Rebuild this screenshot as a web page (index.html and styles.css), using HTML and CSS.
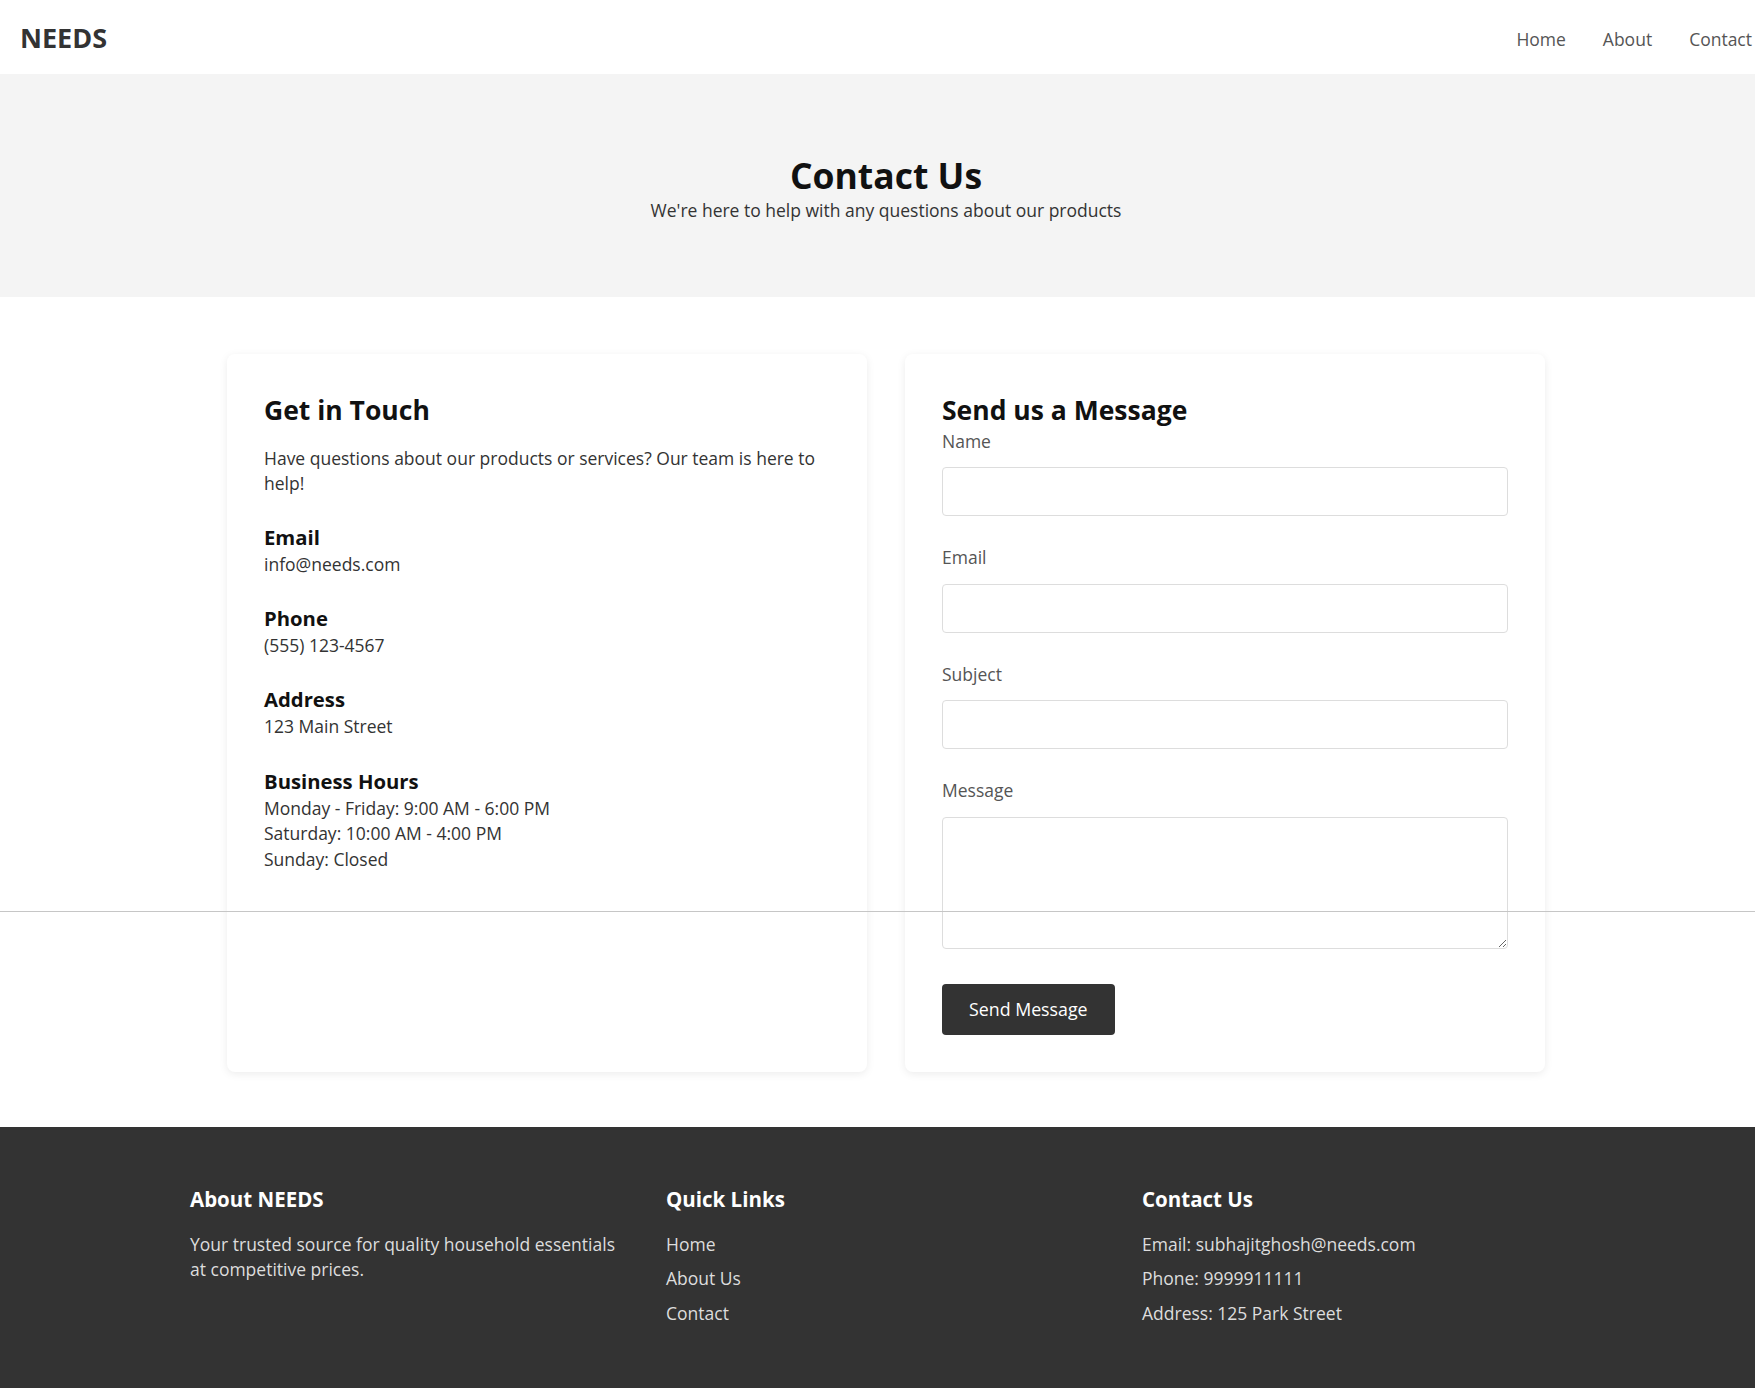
FILE: index.html
```html
<!DOCTYPE html>
<html lang="en">
<head>
<meta charset="utf-8">
<title>Contact Us - NEEDS</title>
<link rel="stylesheet" href="styles.css">
</head>
<body>
<div class="page">
  <header class="site-header">
    <div class="logo">NEEDS</div>
    <nav class="main-nav">
      <a href="#">Home</a>
      <a href="#">About</a>
      <a href="#">Contact</a>
    </nav>
  </header>

  <section class="hero">
    <h1>Contact Us</h1>
    <p>We're here to help with any questions about our products</p>
  </section>

  <main class="contact-section">
    <div class="contact-grid">
      <div class="card info-card">
        <h2>Get in Touch</h2>
        <p class="intro">Have questions about our products or services? Our team is here to help!</p>
        <div class="info-item">
          <h3>Email</h3>
          <p>info@needs.com</p>
        </div>
        <div class="info-item">
          <h3>Phone</h3>
          <p>(555) 123-4567</p>
        </div>
        <div class="info-item">
          <h3>Address</h3>
          <p>123 Main Street</p>
        </div>
        <div class="info-item">
          <h3>Business Hours</h3>
          <p>Monday - Friday: 9:00 AM - 6:00 PM<br>Saturday: 10:00 AM - 4:00 PM<br>Sunday: Closed</p>
        </div>
      </div>

      <div class="card form-card">
        <h2>Send us a Message</h2>
        <form class="contact-form">
          <div class="form-group">
            <label for="name">Name</label>
            <input type="text" id="name">
          </div>
          <div class="form-group">
            <label for="email">Email</label>
            <input type="email" id="email">
          </div>
          <div class="form-group">
            <label for="subject">Subject</label>
            <input type="text" id="subject">
          </div>
          <div class="form-group message-group">
            <label for="message">Message</label>
            <textarea id="message" rows="5"></textarea>
          </div>
          <button type="button" class="send-btn">Send Message</button>
        </form>
      </div>
    </div>
  </main>

  <footer class="site-footer">
    <div class="footer-grid">
      <div class="footer-col">
        <h3>About NEEDS</h3>
        <p class="footer-about">Your trusted source for quality household essentials at competitive prices.</p>
      </div>
      <div class="footer-col">
        <h3>Quick Links</h3>
        <ul class="footer-list">
          <li><a href="#">Home</a></li>
          <li><a href="#">About Us</a></li>
          <li><a href="#">Contact</a></li>
        </ul>
      </div>
      <div class="footer-col">
        <h3>Contact Us</h3>
        <ul class="footer-list">
          <li>Email: subhajitghosh@needs.com</li>
          <li>Phone: 9999911111</li>
          <li>Address: 125 Park Street</li>
        </ul>
      </div>
    </div>
  </footer>

  <div class="seam-line"></div>
</div>
</body>
</html>
```

FILE: styles.css
```css
html {
  background: #333333;
}

body {
  margin: 0;
  overflow-x: hidden;
  font-family: "Open Sans", "Noto Sans", "Liberation Sans", sans-serif;
  font-size: 17.5px;
  line-height: 25.6px;
  color: #333333;
}

.page {
  position: relative;
  width: 1772px;
  background: #ffffff;
}

/* Header */
.site-header {
  height: 74px;
  padding: 0 20px;
  display: flex;
  align-items: center;
  justify-content: space-between;
  background: #ffffff;
}

.logo {
  font-size: 27px;
  font-weight: 700;
  color: #333333;
  line-height: 34px;
  margin-top: 2px;
}

.main-nav {
  display: flex;
  gap: 37px;
  margin-top: 5px;
}

.main-nav a {
  color: #555555;
  text-decoration: none;
  font-size: 17.5px;
}

/* Hero */
.hero {
  background: #f4f4f4;
  text-align: center;
  padding: 80px 0 74px;
}

.hero h1 {
  margin: 0;
  font-size: 35.5px;
  line-height: 42.6px;
  font-weight: 700;
  color: #111111;
}

.hero p {
  margin: 0;
  line-height: 26px;
  color: #333333;
}

/* Contact section */
.contact-section {
  padding: 57px 0 55px;
  background: #ffffff;
}

.contact-grid {
  display: grid;
  grid-template-columns: 640px 640px;
  gap: 38px;
  justify-content: center;
}

.card {
  background: #ffffff;
  border-radius: 8px;
  box-shadow: 0 2px 8px rgba(0, 0, 0, 0.08);
  padding: 37px;
}

.card h2 {
  margin: 0;
  font-size: 26.5px;
  line-height: 38px;
  font-weight: 700;
  color: #111111;
}

.info-card h2 {
  margin-bottom: 17px;
}

.info-card p {
  margin: 0;
}

.intro {
  margin-top: 1px;
}

.info-item {
  margin-top: 26.5px;
}

.info-item h3 {
  margin: 0;
  font-size: 20.3px;
  line-height: 29px;
  font-weight: 700;
  color: #111111;
}

/* Form */
.contact-form {
  display: flex;
  flex-direction: column;
  align-items: flex-start;
}

.form-group {
  width: 100%;
  margin-bottom: 29px;
}

.form-group label {
  display: block;
  margin-bottom: 13px;
  color: #555555;
}

.form-group input,
.form-group textarea {
  display: block;
  width: 100%;
  box-sizing: border-box;
  border: 1px solid #dddddd;
  border-radius: 4px;
  font-family: inherit;
  font-size: 16px;
  background: #ffffff;
}

.form-group input {
  height: 49px;
  padding: 0 12px;
}

.form-group textarea {
  height: 132px;
  padding: 12px;
}

.message-group {
  margin-bottom: 35px;
}

.send-btn {
  background: #333333;
  color: #ffffff;
  border: none;
  border-radius: 4px;
  font-family: inherit;
  font-size: 17.8px;
  line-height: 25px;
  padding: 13px 27px;
  cursor: pointer;
}

/* Footer */
.site-footer {
  background: #333333;
  color: #dddddd;
  padding: 57px 0 58px;
}

.footer-grid {
  width: 1392px;
  margin: 0 auto;
  display: grid;
  grid-template-columns: repeat(3, 440px);
  gap: 36px;
}

.footer-col h3 {
  margin: 0 0 18px;
  font-size: 20.5px;
  line-height: 30px;
  font-weight: 700;
  color: #ffffff;
}

.footer-about {
  margin: 0;
  line-height: 25px;
}

.footer-list {
  list-style: none;
  margin: 0;
  padding: 0;
}

.footer-list li {
  line-height: 25px;
  margin-bottom: 9.3px;
}

.footer-list a {
  color: #dddddd;
  text-decoration: none;
}

/* thin seam line across the captured page */
.seam-line {
  position: absolute;
  left: 0;
  right: 0;
  top: 911px;
  height: 1px;
  background: #c6c6c6;
}
```
